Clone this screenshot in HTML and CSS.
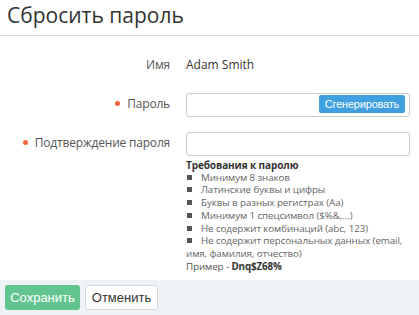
FILE: index.html
```html
<!DOCTYPE html>
<html lang="ru">
  <head>
    <meta charset="UTF-8" />
    <meta name="viewport" content="width=device-width, initial-scale=1.0" />
    <title>Сбросить пароль</title>
    <link rel="stylesheet" href="styles.css">
  </head>
  <body>
    <div class="dialog">
      <div class="heading">
        <h3>Сбросить пароль</h3>
      </div>
      <div class="form">
        <div class="row">
          <label class="label">Имя</label>
          <div class="value">Adam Smith</div>
        </div>
        <div class="row">
          <label class="label required">Пароль</label>
          <div class="field">
            <input type="text" class="input" />
            <button class="generate">Сгенерировать</button>
          </div>
        </div>
        <div class="row">
          <label class="label required">Подтверждение пароля</label>
          <div class="field">
            <input type="text" class="input" />
          </div>
        </div>
        <div class="row">
          <div></div>
          <div class="rules">
            <h4>Требования к паролю</h4>
            <ul>
              <li>Минимум 8 знаков</li>
              <li>Латинские буквы и цифры</li>
              <li>Буквы в разных регистрах (Aa)</li>
              <li>Минимум 1 спецсимвол ($%&amp;,...)</li>
              <li>Не содержит комбинаций (abc, 123)</li>
              <li>Не содержит персональных данных (email, имя, фамилия, отчество)</li>
            </ul>
            <p>Пример - <b>Dnq$Z68%</b></p>
          </div>
        </div>
      </div>
      <div class="footer">
        <button class="btn btn-save">Сохранить</button>
        <button class="btn btn-cancel">Отменить</button>
      </div>
    </div>
  </body>
</html>
```

FILE: styles.css
```css
body {
    margin: 0;
    font-family: "Open Sans", Arial, sans-serif;
    background: #fff;
    color: #333;
}

.dialog {
    width: 419px;
    height: 315px;
    display: flex;
    flex-direction: column;
}

.heading {
    height: 35px;
    border-bottom: 1px solid #d6dee6;
    padding: 0 7px;
}

.heading h3 {
    margin: 0;
    font-size: 21px;
    font-weight: normal;
    line-height: 31px;
    color: #333;
}

.form {
    flex: 1;
    padding: 17px 9px 0 0;
}

.row {
    display: grid;
    grid-template-columns: 170px 1fr;
    column-gap: 16px;
    align-items: center;
    margin-bottom: 15px;
}

.row:last-child {
    margin-bottom: 0;
    margin-top: -11px;
}

.label {
    text-align: right;
    font-size: 12px;
    letter-spacing: -0.2px;
    color: #555;
    line-height: 24px;
}

.label.required::before {
    content: "";
    display: inline-block;
    width: 5px;
    height: 5px;
    border-radius: 50%;
    background: #f0643c;
    margin-right: 7px;
    vertical-align: 2px;
}

.value {
    font-size: 12px;
    line-height: 24px;
    color: #333;
}

.field {
    position: relative;
    height: 24px;
}

.input {
    box-sizing: border-box;
    width: 100%;
    height: 24px;
    border: 1px solid #c8ccd1;
    border-radius: 3px;
    padding: 0 6px;
    margin: 0;
}

.generate {
    position: absolute;
    right: 5px;
    top: 3px;
    width: 86px;
    height: 18px;
    border: none;
    border-radius: 2px;
    background: #3f9fdf;
    color: #fff;
    font-family: "Liberation Sans", Arial, sans-serif;
    font-size: 11px;
    letter-spacing: -0.2px;
    padding: 0;
}

.rules {
    font-size: 9.8px;
    letter-spacing: -0.1px;
    line-height: 12.7px;
    color: #666;
    margin-right: -9px;
}

.rules h4 {
    margin: 0;
    font-size: 10px;
    font-weight: bold;
    color: #333;
}

.rules ul {
    margin: 0;
    padding: 0;
    list-style: none;
}

.rules li::before {
    content: "";
    display: inline-block;
    width: 5px;
    height: 5px;
    background: #555;
    margin: 0 9px 0 1px;
    vertical-align: 1px;
}

.rules p {
    margin: 0;
    color: #555;
}

.rules b {
    color: #333;
}

.footer {
    height: 35px;
    box-sizing: border-box;
    background: #f0f3f6;
    padding: 5px;
    display: flex;
    gap: 5px;
}

.btn {
    height: 25px;
    border-radius: 3px;
    font-family: "Liberation Sans", Arial, sans-serif;
    font-size: 13px;
    padding: 0;
}

.btn-save {
    width: 75px;
    border: none;
    background: #62c48f;
    color: #fff;
}

.btn-cancel {
    width: 73px;
    border: 1px solid #d3d8dd;
    background: #fff;
    color: #333;
}
```
